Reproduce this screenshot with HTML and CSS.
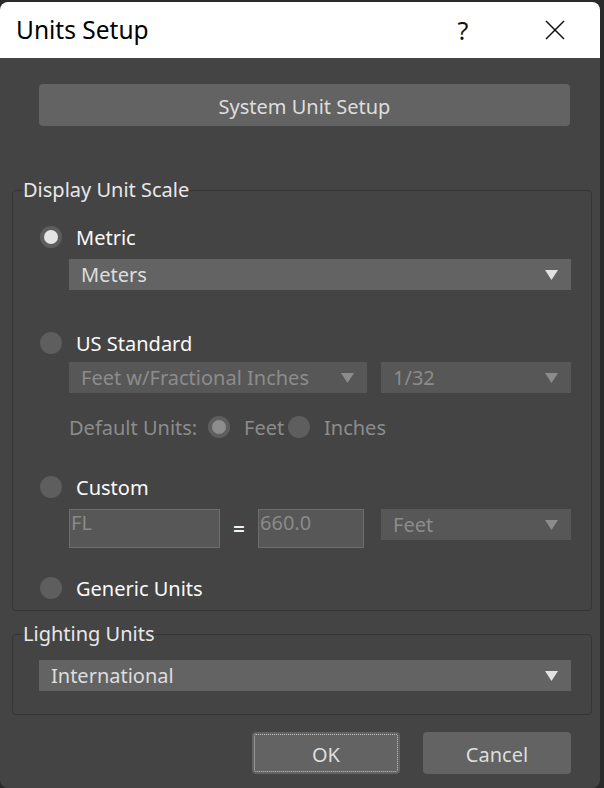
FILE: index.html
```html
<!DOCTYPE html>
<html>
<head>
<meta charset="utf-8">
<title>Units Setup</title>
<link rel="stylesheet" href="styles.css">
</head>
<body>
<div class="window">
  <div class="titlebar">
    <span class="title">Units Setup</span>
    <span class="help">?</span>
    <span class="close"><svg width="20" height="20" viewBox="0 0 20 20"><path d="M1 1L19 19M19 1L1 19" stroke="#111" stroke-width="1.5" fill="none"/></svg></span>
  </div>
  <div class="body">
    <button class="btn sys">System Unit Setup</button>

    <fieldset class="group display">
      <legend>Display Unit Scale</legend>
      <div class="inner display-inner">
        <div class="radio-row r-metric"><span class="radio on"></span><span class="rlabel">Metric</span></div>
        <div class="select meters"><span>Meters</span><svg class="arrow" width="13" height="10" viewBox="0 0 13 10"><path d="M0 0H13L6.5 10Z"/></svg></div>

        <div class="radio-row r-us"><span class="radio"></span><span class="rlabel">US Standard</span></div>
        <div class="pair">
          <div class="select dis fract"><span>Feet w/Fractional Inches</span><svg class="arrow" width="13" height="10" viewBox="0 0 13 10"><path d="M0 0H13L6.5 10Z"/></svg></div>
          <div class="select dis frac32"><span>1/32</span><svg class="arrow" width="13" height="10" viewBox="0 0 13 10"><path d="M0 0H13L6.5 10Z"/></svg></div>
        </div>
        <div class="defunits">
          <span class="du-label">Default Units:</span>
          <span class="radio dis-on"></span>
          <span class="du-feet">Feet</span>
          <span class="radio"></span>
          <span class="du-inches">Inches</span>
        </div>

        <div class="radio-row r-custom"><span class="radio"></span><span class="rlabel">Custom</span></div>
        <div class="custom">
          <div class="field fl">FL</div>
          <span class="eq">=</span>
          <div class="field num">660.0</div>
          <div class="select dis cfeet"><span>Feet</span><svg class="arrow" width="13" height="10" viewBox="0 0 13 10"><path d="M0 0H13L6.5 10Z"/></svg></div>
        </div>

        <div class="radio-row r-generic"><span class="radio"></span><span class="rlabel">Generic Units</span></div>
      </div>
    </fieldset>

    <fieldset class="group lighting">
      <legend>Lighting Units</legend>
      <div class="inner light-inner">
        <div class="select intl"><span>International</span><svg class="arrow" width="13" height="10" viewBox="0 0 13 10"><path d="M0 0H13L6.5 10Z"/></svg></div>
      </div>
    </fieldset>

    <div class="actions">
      <button class="btn ok">OK</button>
      <button class="btn cancel">Cancel</button>
    </div>
  </div>
</div>
</body>
</html>
```

FILE: styles.css
```css
* { box-sizing: border-box; }
html, body { margin: 0; padding: 0; }
body {
  background: #2a2a2a;
  font-family: "Noto Sans", "Open Sans", sans-serif;
  width: 604px;
  height: 788px;
  overflow: hidden;
}
.window {
  width: 600px;
  height: 786px;
  margin-top: 2px;
  background: #444444;
  border-radius: 8px;
  overflow: hidden;
  display: flex;
  flex-direction: column;
}
.titlebar {
  height: 56px;
  flex: none;
  background: #ffffff;
  display: flex;
  align-items: center;
  padding-left: 16px;
}
.title {
  flex: 1;
  font-size: 24.5px;
  color: #000;
  line-height: 1;
}
.help {
  width: 20px;
  text-align: center;
  font-size: 25px;
  color: #111;
  line-height: 1;
  margin-right: 72px;
}
.close {
  width: 20px;
  height: 20px;
  margin-right: 35px;
  display: flex;
}
.body {
  padding-top: 26px;
  display: flex;
  flex-direction: column;
}
.btn {
  background: #636363;
  border: none;
  border-radius: 4px;
  color: #dedede;
  font-family: "Noto Sans", "Open Sans", sans-serif;
  font-size: 20px;
  height: 42px;
  padding: 2px 0 0;
}
.sys {
  margin: 0 30px 0 39px;
}
.group {
  margin: 0 8px 0 12px;
  padding: 0;
  border: 1px solid #353535;
  border-radius: 4px;
  min-inline-size: 0;
}
.group legend {
  padding: 0;
  margin-left: 10px;
  font-size: 20px;
  line-height: 24px;
  color: #e8e8e8;
}
.display { margin-top: 52px; }
.display-inner {
  display: flex;
  flex-direction: column;
  padding: 20px 20px 7px 0;
}
.radio-row {
  height: 30px;
  display: flex;
  align-items: center;
  padding-left: 27px;
}
.radio {
  width: 22px;
  height: 22px;
  border-radius: 50%;
  background: #5e5e5e;
  flex: none;
  display: flex;
  align-items: center;
  justify-content: center;
}
.radio.on::after,
.radio.dis-on::after {
  content: "";
  width: 14px;
  height: 14px;
  border-radius: 50%;
  background: #e4e4e4;
}
.radio.dis-on::after { background: #8d8d8d; }
.rlabel {
  margin-left: 14px;
  font-size: 20px;
  color: #fafafa;
}
.select {
  height: 31px;
  display: flex;
  align-items: center;
  justify-content: space-between;
  padding: 0 13px 0 12px;
  background: #636363;
  color: #dedede;
  font-size: 20px;
}
.select .arrow { fill: #e2e2e2; flex: none; }
.select.dis { background: #575757; color: #8c8c8c; }
.select.dis .arrow { fill: #8c8c8c; }
.meters { margin: 7px 0 0 56px; }
.r-us { margin-top: 38px; }
.pair {
  margin: 4px 0 0 56px;
  display: flex;
  gap: 14px;
}
.fract { width: 298px; }
.frac32 { flex: 1; }
.defunits {
  margin: 19px 0 0 56px;
  height: 30px;
  display: flex;
  align-items: center;
  font-size: 20px;
  color: #8c8c8c;
}
.du-label { width: 139px; white-space: nowrap; }
.du-feet { width: 58px; padding-left: 14px; }
.du-inches { padding-left: 14px; }
.r-custom { margin-top: 30px; }
.custom {
  margin: 7px 0 0 56px;
  display: flex;
  align-items: flex-start;
}
.field {
  height: 39px;
  background: #575757;
  border: 1px solid #6d6d6d;
  color: #8a8a8a;
  font-size: 20px;
  line-height: 26px;
  padding-left: 1px;
}
.fl { width: 151px; }
.eq {
  width: 38px;
  text-align: center;
  color: #f4f4f4;
  font-size: 20px;
  line-height: 39px;
  font-weight: bold;
}
.num { width: 106px; }
.cfeet { margin-left: 17px; flex: 1; }
.r-generic { margin-top: 25px; }
.lighting { margin-top: 11px; }
.light-inner { padding: 14px 20px 23px 26px; }
.actions {
  margin-top: 17px;
  padding-right: 29px;
  display: flex;
  justify-content: flex-end;
  gap: 23px;
}
.ok, .cancel { width: 148px; }
.ok { outline: 1px dotted #c4c4c4; outline-offset: -3px; }
```
